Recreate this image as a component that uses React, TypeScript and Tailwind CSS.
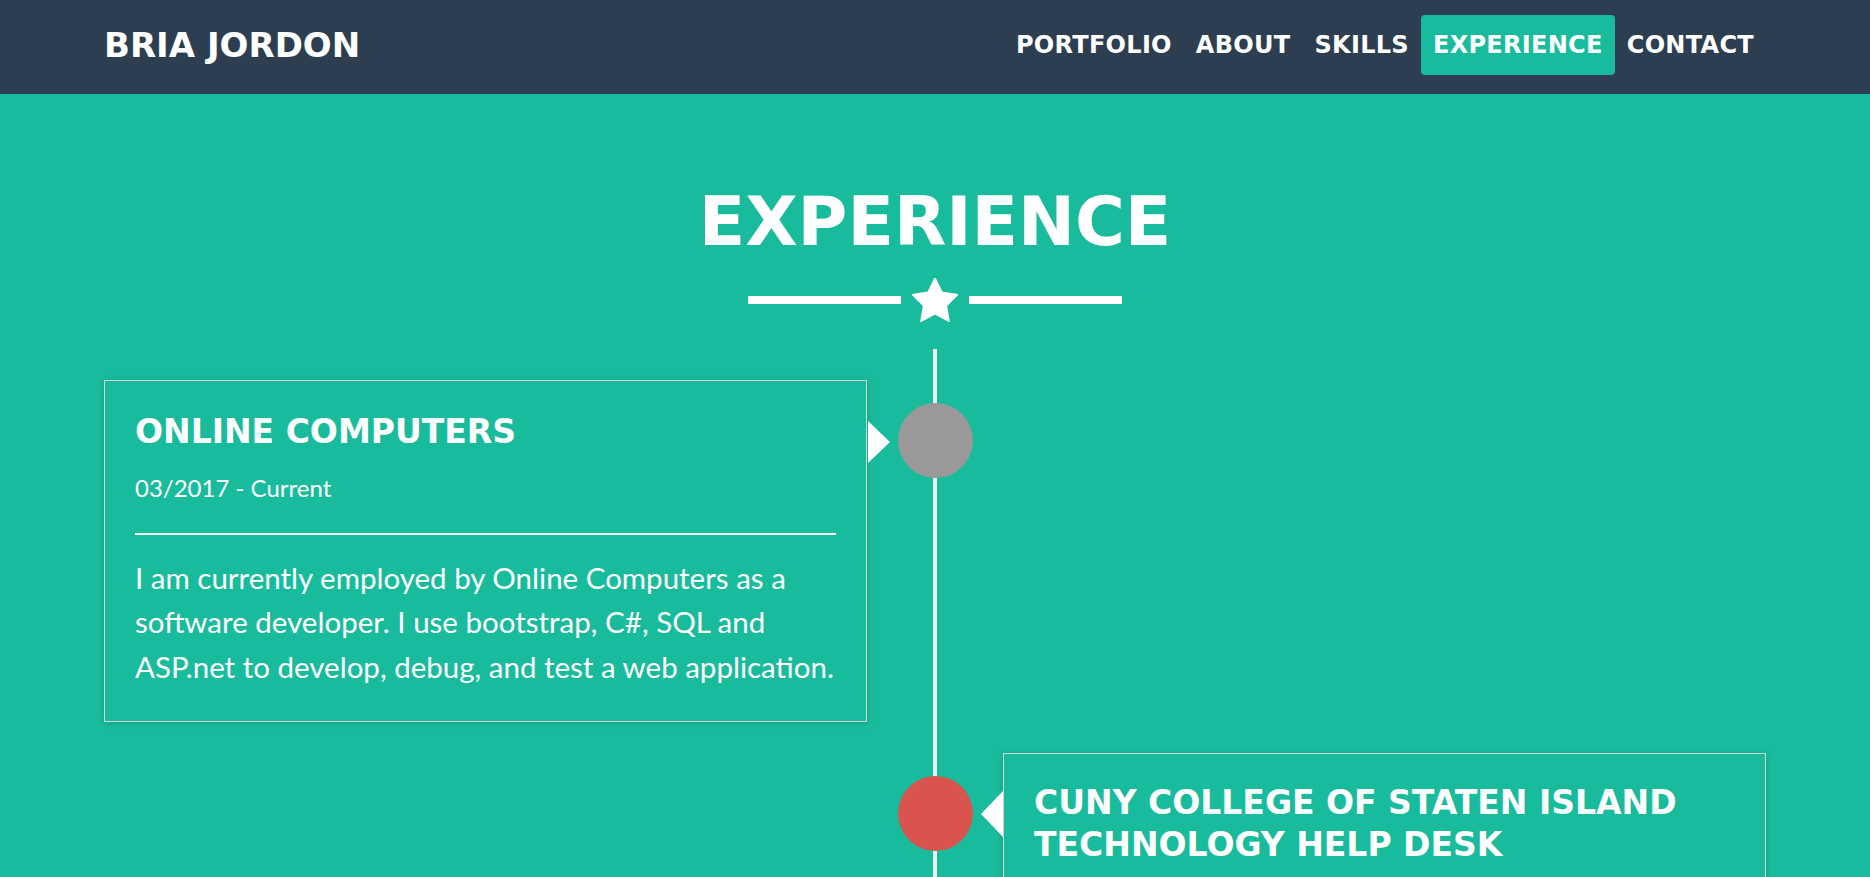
import { useState } from 'react';

type Job = {
    title: string;
    dates: string;
    text: string;
    dot: string;
    side: 'left' | 'right';
};

const jobs: Job[] = [
    {
        title: 'Online Computers',
        dates: '03/2017 - Current',
        text: 'I am currently employed by Online Computers as a software developer. I use bootstrap, C#, SQL and ASP.net to develop, debug, and test a web application.',
        dot: 'bg-[#999999]',
        side: 'left',
    },
    {
        title: 'CUNY College of Staten Island Technology Help Desk',
        dates: '09/2014 - 03/2017',
        text: 'I provided technical support to students, faculty and staff, troubleshooting hardware, software and network issues across campus.',
        dot: 'bg-[#d9534f]',
        side: 'right',
    },
];

const links = ['Portfolio', 'About', 'Skills', 'Experience', 'Contact'];

function NavBar() {
    const [active, setActive] = useState('Experience');
    return (
        <nav className="h-[94px] bg-[#2c3e50] px-[104px] pb-[5px] flex items-center justify-between font-['DejaVu_Sans',sans-serif] font-bold text-white uppercase">
            <a href="#" className="text-[34px] leading-none">Bria Jordon</a>
            <ul className="flex items-center">
                {links.map((l) => (
                    <li key={l}>
                        <a
                            href="#"
                            onClick={() => setActive(l)}
                            className={
                                'h-[60px] px-3 flex items-center rounded text-[24px] leading-none tracking-[0.3px] ' +
                                (active === l ? 'bg-[#18bc9c]' : '')
                            }
                        >
                            {l}
                        </a>
                    </li>
                ))}
            </ul>
        </nav>
    );
}

function Card({ job }: { job: Job }) {
    const left = job.side === 'left';
    return (
        <div
            className={
                'relative border-[1.5px] border-[#d4d4d4] shadow-[0_1px_6px_rgba(0,0,0,0.18)] px-[30px] pb-[32px] text-white ' +
                (left ? 'pt-[30px]' : 'pt-[28px]')
            }
        >
            {/* arrow toward the dot */}
            {left ? (
                <span className="absolute top-[40px] right-[-23.5px] w-0 h-0 border-y-[21px] border-y-transparent border-l-[22px] border-l-white" />
            ) : (
                <span className="absolute top-[37px] left-[-23.5px] w-0 h-0 border-y-[23px] border-y-transparent border-r-[22px] border-r-white" />
            )}
            <h4 className="font-['DejaVu_Sans',sans-serif] font-bold uppercase text-[33px] leading-[42px]">{job.title}</h4>
            <p className="font-['Lato',sans-serif] text-[24px] leading-[34px] mt-[18px]">{job.dates}</p>
            <hr className="mt-[28px] border-0 h-[1.5px] bg-white" />
            <p className="font-['Lato',sans-serif] text-[29.5px] leading-[44.5px] mt-[21px]">{job.text}</p>
        </div>
    );
}

function Row({ job }: { job: Job }) {
    return (
        <div className="grid grid-cols-[1fr_136px_1fr]">
            <div>{job.side === 'left' && <Card job={job} />}</div>
            <div className="flex justify-center">
                <div className={`relative mt-[23px] w-[75px] h-[75px] rounded-full ${job.dot}`} />
            </div>
            <div>{job.side === 'right' && <Card job={job} />}</div>
        </div>
    );
}

export default function App() {
    return (
        <div className="min-h-screen bg-[#18bc9c]">
            <NavBar />
            <section className="pt-[94px] pb-24 px-[104px]">
                <h2 className="text-center text-white font-['DejaVu_Sans',sans-serif] font-bold text-[68px] leading-none uppercase">
                    Experience
                </h2>
                <div className="mt-[22px] flex items-center justify-center gap-[11px]">
                    <span className="w-[153px] h-[8px] bg-white" />
                    <svg width="46" height="44" viewBox="2 2 20 19.3" className="fill-white">
                        <polygon points="12,2 15.09,8.26 22,9.27 17,14.14 18.18,21.02 12,17.77 5.82,21.02 7,14.14 2,9.27 8.91,8.26" strokeLinejoin="round" stroke="white" strokeWidth="0.6" />
                    </svg>
                    <span className="w-[153px] h-[8px] bg-white" />
                </div>
                <div className="relative mt-[27px] pt-[31px]">
                    <span className="absolute top-0 bottom-0 left-1/2 -translate-x-1/2 w-1 bg-[#eeeeee]" />
                    <ul className="relative flex flex-col gap-[31px]">
                        {jobs.map((j) => (
                            <li key={j.title}>
                                <Row job={j} />
                            </li>
                        ))}
                    </ul>
                </div>
            </section>
        </div>
    );
}
